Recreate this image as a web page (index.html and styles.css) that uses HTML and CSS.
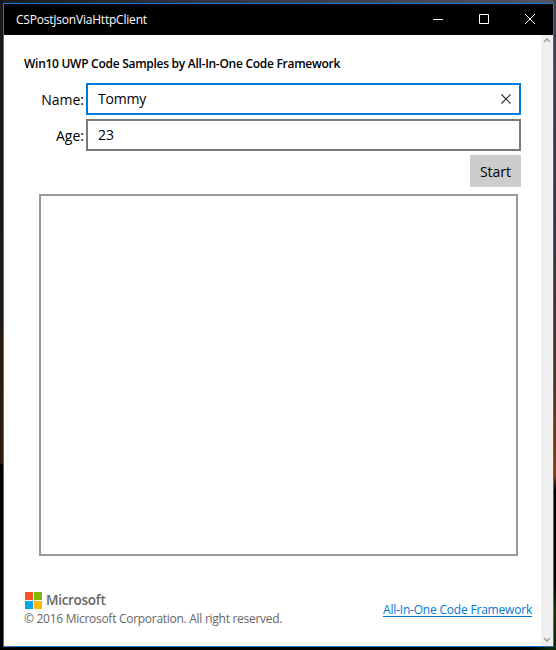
FILE: index.html
```html
<!DOCTYPE html>
<html lang="en">
<head>
<meta charset="utf-8">
<title>CSPostJsonViaHttpClient</title>
<link rel="stylesheet" href="styles.css">
</head>
<body>
<div class="window">
  <header class="titlebar">
    <span class="title">CSPostJsonViaHttpClient</span>
    <div class="controls">
      <svg width="46" height="31"><path d="M18 15.5h10"/></svg>
      <svg width="46" height="31"><path d="M18.500 10.500h9v9h-9z"/></svg>
      <svg width="46" height="31"><path d="M18 10l10 10M28 10l-10 10"/></svg>
    </div>
  </header>
  <div class="body">
    <main class="content">
      <h1 class="heading">Win10 UWP Code Samples by All-In-One Code Framework</h1>
      <div class="row">
        <span class="label">Name:</span>
        <div class="field focused"><span class="value">Tommy</span>
          <svg class="clear" width="10" height="10"><path d="M.5 .5l9 9M9.500 .5l-9 9"/></svg>
        </div>
      </div>
      <div class="row">
        <span class="label">Age:</span>
        <div class="field"><span>23</span></div>
      </div>
      <div class="button">Start</div>
      <div class="output"></div>
      <footer class="footer">
        <div>
          <div class="brand">
            <svg width="17" height="17" shape-rendering="crispEdges"><path fill="#f35325" d="M0 0h8v8H0z"/><path fill="#7fba00" d="M9 0h8v8H9z"/><path fill="#05a6f0" d="M0 9h8v8H0z"/><path fill="#ffba08" d="M9 9h8v8H9z"/></svg>
            <span>Microsoft</span>
          </div>
          <div class="copyright">© 2016 Microsoft Corporation. All right reserved.</div>
        </div>
        <a class="link">All-In-One Code Framework</a>
      </footer>
    </main>
    <div class="scrollbar">
      <svg width="8" height="5"><path d="M1 4l3-3 3 3"/></svg>
      <svg width="8" height="5"><path d="M1 1l3 3 3-3"/></svg>
    </div>
  </div>
</div>
</body>
</html>
```
FILE: styles.css
```css
* { box-sizing: border-box; }
body {
  margin: 0;
  width: 556px;
  height: 650px;
  padding: 3px 2px 3px 3px;
  overflow: hidden;
  font-family: "Open Sans", "Noto Sans", sans-serif;
  color: #000;
  background:
    linear-gradient(#17191e 0, #191817 200px, #2b1b10 463px, #000 465px) left / 3px 100% no-repeat,
    linear-gradient(#41404c 0, #343440 220px, #41312e 350px, #6a3410 440px, #8a3b06 475px, #1a0c04 487px, #000 490px, #000 585px, #173907 610px, #0c2404 650px) right / 3px 100% no-repeat,
    linear-gradient(90deg, #1a1c21, #343641 40%, #555462) top / 100% 3px no-repeat,
    linear-gradient(90deg, #000 95%, #123205) bottom / 100% 3px no-repeat;
}
svg { display: block; fill: none; }
.window {
  width: 551px;
  height: 644px;
  border: 1px solid #1979ca;
  background: #fff;
  display: flex;
  flex-direction: column;
}
.titlebar {
  height: 31px;
  background: #000;
  color: #fff;
  display: flex;
  justify-content: space-between;
  align-items: center;
  padding-left: 12px;
  font-size: 12px;
}
.title { letter-spacing: -0.21px; margin-top: -1px; }
.controls { display: flex; }
.controls svg { stroke: #fff; stroke-width: 1; }
.body { flex: 1; display: flex; min-height: 0; }
.content { width: 537px; padding: 19px 0 0 20px; }
.heading {
  margin: 0 0 9px;
  font-size: 12px;
  line-height: 20px;
  font-weight: 600;
  white-space: nowrap;
  letter-spacing: -0.28px;
}
.row { display: flex; height: 32px; margin-bottom: 4px; font-size: 14px; }
.label { width: 62px; padding-right: 2px; text-align: right; line-height: 33px; white-space: nowrap; }
.field {
  width: 435px;
  border: 2px solid #7a7a7a;
  padding: 0 8px 0 10px;
  display: flex;
  align-items: center;
  justify-content: space-between;
  line-height: 28px;
}
.focused { border-color: #0078d7; }
.value { letter-spacing: -0.2px; }
.clear { stroke: #333; stroke-width: 1.2; }
.button {
  width: 51px;
  height: 32px;
  margin-left: 446px;
  background: #ccc;
  font-size: 14px;
  line-height: 33px;
  text-align: center;
}
.output { margin: 7px 0 0 15px; width: 479px; height: 362px; border: 2px solid #999; }
.footer { display: flex; justify-content: space-between; padding: 36px 9px 0 1px; color: #666; }
.brand { display: flex; align-items: center; gap: 4px; height: 17px; font-size: 13.5px; font-weight: 600; line-height: 17px; letter-spacing: -0.28px; }
.copyright { margin-left: -1px; font-size: 12px; line-height: 19px; white-space: nowrap; letter-spacing: -0.28px; }
.link { margin-top: 8px; font-size: 12px; line-height: 19px; color: #0078d7; text-decoration: underline; text-underline-offset: 2px; white-space: nowrap; letter-spacing: -0.2px; }
.scrollbar {
  width: 12px;
  background: #f0f0f0;
  display: flex;
  flex-direction: column;
  justify-content: space-between;
  align-items: center;
  padding: 3px 0 4px;
}
.scrollbar svg { stroke: #999; stroke-width: 1.300; }
```
